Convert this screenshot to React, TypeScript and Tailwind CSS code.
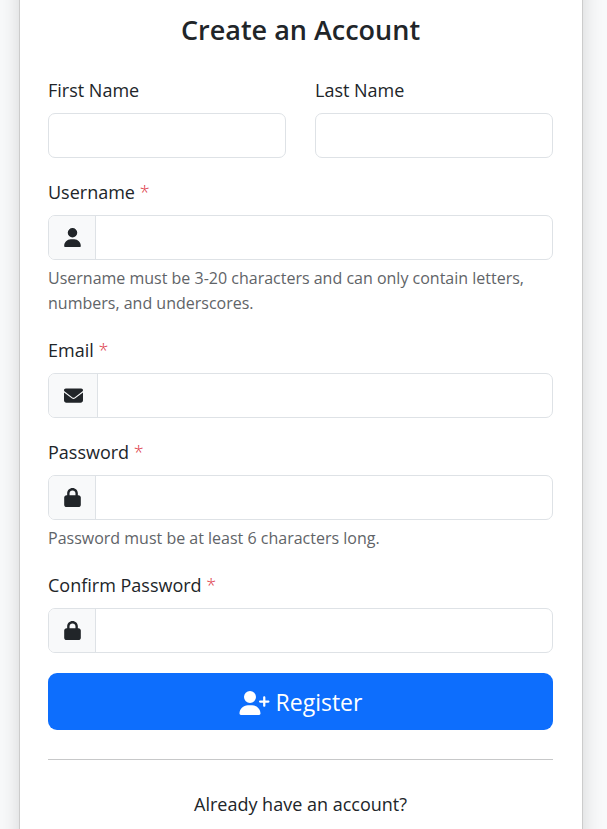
import type { ReactNode } from "react";
import { FaEnvelope, FaLock, FaUser, FaUserPlus } from "react-icons/fa6";

interface FieldProps {
  id: string;
  label: string;
  type?: string;
  required?: boolean;
  icon?: ReactNode;
  help?: string;
}

function Field({ id, label, type = "text", required, icon, help }: FieldProps) {
  return (
    <div className="mb-5">
      <label htmlFor={id} className="mb-[9px] block text-[18px] leading-7">
        {label}
        {required && <span className="font-light text-[#dc3545]"> *</span>}
      </label>
      <div className="flex h-[45px] overflow-hidden rounded-[7px] border border-[#dee2e6] bg-white focus-within:border-[#86b7fe]">
        {icon && (
          <span className="flex shrink-0 items-center border-r border-[#dee2e6] bg-[#f8f9fa] pr-3.5 pl-[15px] text-[19px]">
            {icon}
          </span>
        )}
        <input
          id={id}
          name={id}
          type={type}
          required={required}
          aria-describedby={help ? `${id}-help` : undefined}
          className="min-w-0 flex-1 bg-transparent px-3.5 text-[18px] outline-none"
        />
      </div>
      {help && (
        <p id={`${id}-help`} className="mt-1.5 text-[16px] leading-[25px] text-[#5f6468]">
          {help}
        </p>
      )}
    </div>
  );
}

export default function App() {
  return (
    <main className="flex min-h-screen overflow-hidden bg-[#f8f9fa] pr-6 pl-[19px] font-['Open_Sans','Noto_Sans',sans-serif] text-[#212529]">
      <div className="-my-10 flex-1 border border-black/20 bg-white pt-[51px] pr-[29px] pb-12 pl-7 shadow-[0_9px_19px_rgb(0_0_0_/_0.15)]">
        <h1 className="mb-7 text-center text-[27px] leading-9 font-semibold">
          Create an Account
        </h1>

        <form onSubmit={(e) => e.preventDefault()}>
          <div className="grid grid-cols-2 gap-[29px]">
            <Field id="first_name" label="First Name" />
            <Field id="last_name" label="Last Name" />
          </div>
          <Field
            id="username"
            label="Username"
            required
            icon={<FaUser className="h-[19px] w-[17px]" />}
            help="Username must be 3-20 characters and can only contain letters, numbers, and underscores."
          />
          <Field
            id="email"
            label="Email"
            type="email"
            required
            icon={<FaEnvelope />}
          />
          <Field
            id="password"
            label="Password"
            type="password"
            required
            icon={<FaLock className="h-[19px] w-[17px]" />}
            help="Password must be at least 6 characters long."
          />
          <Field
            id="confirm_password"
            label="Confirm Password"
            type="password"
            required
            icon={<FaLock className="h-[19px] w-[17px]" />}
          />
          <button
            type="submit"
            className="flex h-[57px] w-full items-center justify-center gap-1.5 rounded-[9px] bg-[#0d6efd] pt-0.5 text-[23px] text-white hover:bg-[#0b5ed7]"
          >
            <FaUserPlus className="h-6 w-[31px]" />
            Register
          </button>
        </form>

        <hr className="my-[29px] border-[#c7c8c9]" />

        <p className="text-center text-[18px] leading-[30px]">Already have an account?</p>
      </div>
    </main>
  );
}
